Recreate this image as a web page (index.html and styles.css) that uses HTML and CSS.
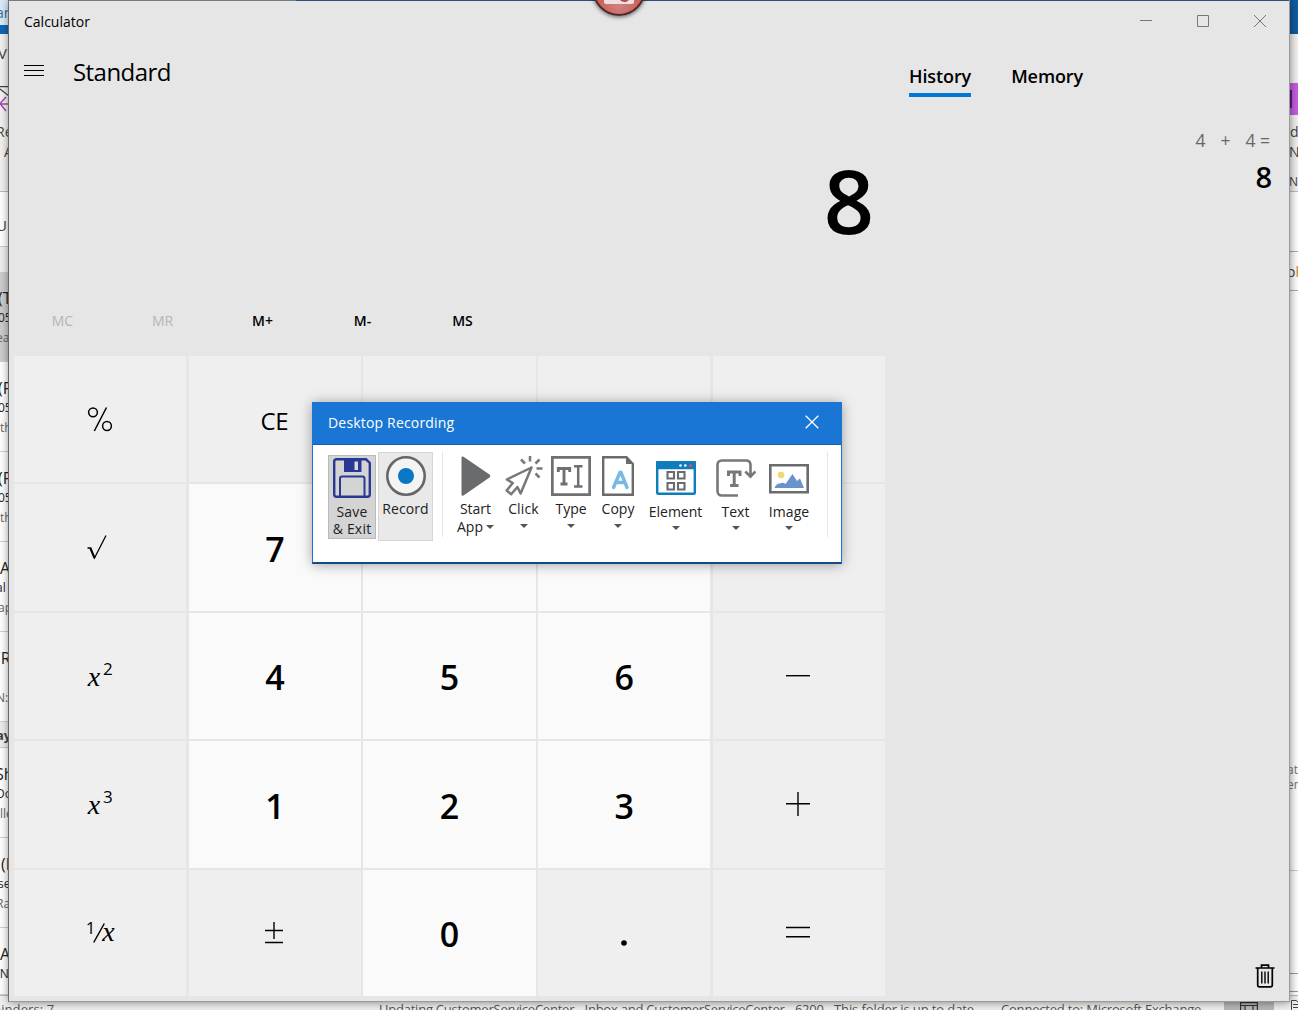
FILE: index.html
```html
<!DOCTYPE html>
<html lang="en">
<head>
<meta charset="utf-8">
<title>Calculator</title>
<link rel="stylesheet" href="styles.css">
</head>
<body>
<div class="desktop">
  <div class="mailapp">
    <div class="mailbody">
      <div class="mail-left">
        <div class="l-tab"><p class="in3">an</p></div>
        <div class="l-blue"></div>
        <div class="l-view"><p class="in1">V</p></div>
        <div class="l-ribbon">
          <svg width="9" height="30" viewBox="0 0 9 30" fill="none"><path d="M0 .5H9M0 3L9 10" stroke="#444" stroke-width="1.3"/><path d="M0 18H9M6 11L0 17.5L6 25" stroke="#a747b2" stroke-width="1.5"/></svg>
          <p class="in3">Re</p><p class="out4">A</p>
        </div>
        <div class="l-search"><p class="in3">Un</p></div>
        <div class="l-head"></div>
        <div class="mail selected"><p class="in1">(T</p><p class="in1">05</p><p class="in3">ea</p></div>
        <div class="mail"><p class="in1">(F</p><p class="in1">05</p><p>th</p></div>
        <div class="mail"><p class="in1">(F</p><p class="in1">05</p><p>th</p></div>
        <div class="mail"><p>A</p><p class="in3">al</p><p class="in1">ap</p></div>
        <div class="mail"><p class="in3">(R</p><p>&nbsp;</p><p class="in3">N:</p></div>
        <div class="l-day"><p class="in3">ay</p></div>
        <div class="mail"><p class="in4">Sh</p><p class="in3">Do</p><p>lle</p></div>
        <div class="mail"><p class="out1">(I</p><p class="in1">se</p><p class="in3">Ra</p></div>
        <div class="mail last"><p>A</p><p class="in3">-N</p></div>
      </div>
      <div class="mail-right">
        <div class="r-blue"></div>
        <div class="r-view"></div>
        <div class="r-purple"><i></i></div>
        <div class="r-ribbon"><p class="out1">d</p><p>N</p><p class="small">N</p></div>
        <div class="r-white"></div>
        <div class="r-folder"><p class="in1">o<b>l</b></p></div>
        <div class="r-note"><p class="in1">at</p><p class="in1">em</p></div>
        <div class="r-gap"></div>
        <div class="r-gap2"></div>
      </div>
    </div>
    <div class="statusbar">
      <span class="st-rem">minders: 7</span>
      <span class="st-upd">Updating CustomerServiceCenter - Inbox and CustomerServiceCenter - 6200.</span>
      <span class="st-date">This folder is up to date.</span>
      <span class="st-con">Connected to: Microsoft Exchange</span>
      <span class="st-view"><svg width="18" height="8" viewBox="0 0 18 8" fill="none" stroke="#333" stroke-width="1.2"><path d="M.6 8V.6H17.4V8M0 3.5H18M5 3.5V8M13 3.5V8"/></svg></span>
      <span class="st-read"><svg width="8" height="16" viewBox="0 0 8 16" fill="none" stroke="#444"><path d="M1.5 16V1.500H6L8 3M3 5.500H8M3 8.500H8M3 11.500H8"/></svg></span>
    </div>
  </div>

  <div class="calc">
    <main class="pad">
      <div class="title">Calculator</div>
      <div class="mode">
        <svg width="20" height="12" viewBox="0 0 20 12" stroke="#000"><path d="M0 .5H20M0 5.500H20M0 10.500H20"/></svg>
        <span>Standard</span>
      </div>
      <div class="display">8</div>
      <div class="memrow"><span class="off">MC</span><span class="off">MR</span><span>M+</span><span>M-</span><span>MS</span></div>
      <div class="keys">
        <div class="key"><svg class="pct" width="26" height="26" viewBox="0 0 26 26" fill="none" stroke="#000" stroke-width="1.500"><circle cx="6" cy="6.300" r="4.400"/><circle cx="20" cy="20" r="4.400"/><path d="M19.500 1.500L7.300 25"/></svg></div>
        <div class="key ce">CE</div>
        <div class="key"></div><div class="key"></div><div class="key"></div>

        <div class="key"><svg class="root" width="22" height="26" viewBox="0 0 22 26" fill="none" stroke="#000"><path d="M1.500 14H4.500L8.500 24L20 1.500" stroke-width="1.300"/><path d="M4.300 14L8.500 24" stroke-width="2"/></svg></div>
        <div class="key num">7</div><div class="key num">8</div><div class="key num">9</div><div class="key"></div>

        <div class="key"><span class="pow"><i>x</i><sup>2</sup></span></div>
        <div class="key num">4</div><div class="key num">5</div><div class="key num">6</div>
        <div class="key op"><svg width="24" height="24" viewBox="0 0 24 24" stroke="#000" stroke-width="1.400"><path d="M0 11.700H24"/></svg></div>

        <div class="key"><span class="pow"><i>x</i><sup>3</sup></span></div>
        <div class="key num low1">1</div><div class="key num low1">2</div><div class="key num low1">3</div>
        <div class="key op"><svg width="24" height="24" viewBox="0 0 24 24" stroke="#000" stroke-width="1.400"><path d="M0 11.700H24M12 0V24"/></svg></div>

        <div class="key"><span class="inv"><sup>1</sup><svg width="12" height="20" viewBox="0 0 12 20" stroke="#000" stroke-width="1.500"><path d="M.7 19.500L11.300 .5"/></svg><i>x</i></span></div>
        <div class="key op"><svg width="20" height="24" viewBox="0 0 20 24" stroke="#000" stroke-width="1.400"><path d="M1 9.500H19M10 1V18M1 21.500H19"/></svg></div>
        <div class="key num">0</div>
        <div class="key dot"><svg width="8" height="8" viewBox="0 0 8 8"><circle cx="4" cy="4" r="2.800"/></svg></div>
        <div class="key op"><svg width="24" height="24" viewBox="0 0 24 24" stroke="#000" stroke-width="1.500"><path d="M0 6.500H24M0 15.800H24"/></svg></div>
      </div>
    </main>
    <aside class="side">
      <div class="controls">
        <svg width="12" height="12" viewBox="0 0 12 12" fill="none" stroke="#777"><path d="M0 5.500H12"/></svg>
        <svg width="12" height="12" viewBox="0 0 12 12" fill="none" stroke="#777"><path d="M.5 .5H11.500V11.500H.5Z"/></svg>
        <svg width="12" height="12" viewBox="0 0 12 12" fill="none" stroke="#777"><path d="M0 0L12 12M12 0L0 12"/></svg>
      </div>
      <div class="tabs"><span class="active">History</span><span>Memory</span></div>
      <div class="expr"><span>4</span><span>+</span><span>4 =</span></div>
      <div class="result">8</div>
      <svg class="trash" width="20" height="24" viewBox="0 0 20 24" fill="none" stroke="#000" stroke-width="1.700"><path d="M.5 4H19.500M6.500 4V1.200H13.500V4M2.700 4V21Q2.700 22.800 4.500 22.800H15.500Q17.300 22.800 17.300 21V4"/><path d="M6.800 7.500V19.500M10 7.500V19.500M13.200 7.500V19.500" stroke-width="1.400"/></svg>
    </aside>
  </div>

  <div class="badge"><svg width="30" height="5" viewBox="0 0 30 5"><path d="M0 0H30V2Q30 4 28 4H2Q0 4 0 2Z" fill="#f1dede"/><path d="M16 0Q18 2.500 22 2L25 0Z" fill="#b4474c"/></svg></div>

  <div class="rec">
    <div class="rec-title"><span>Desktop Recording</span>
      <svg width="14" height="14" viewBox="0 0 14 14" stroke="#fff" stroke-width="1.300"><path d="M.7 .7L13.300 13.300M13.300 .7L.7 13.300"/></svg>
    </div>
    <div class="tools">
      <div class="save">
        <svg width="38" height="40" viewBox="0 0 38 40"><path d="M1.200 3.500Q1.200 1.300 3.500 1.300H33L36.800 5V36.500Q36.800 38.700 34.500 38.700H3.500Q1.200 38.700 1.200 36.500Z" fill="none" stroke="#293894" stroke-width="2.400"/><path d="M11 1H28.500V14H11Z" fill="#293894"/><path d="M21.500 3.500H25V12H21.500Z" fill="#d8d8d8"/><path d="M7 38V20.500Q7 18.500 9 18.500H29.500Q31.500 18.500 31.500 20.500V38" fill="none" stroke="#293894" stroke-width="2"/></svg>
        <p>Save</p><p>&amp; Exit</p>
      </div>
      <div class="record">
        <svg width="40" height="40" viewBox="0 0 40 40"><circle cx="20" cy="20" r="18.700" fill="#f4f4f4" stroke="#666" stroke-width="2.600"/><circle cx="20" cy="20" r="8" fill="#0878c4"/></svg>
        <p>Record</p>
      </div>
      <div class="sep"></div>
      <div class="tool w-start">
        <svg width="30" height="40" viewBox="0 0 30 40"><path d="M.5 2Q.5 0 2.500 .7L28.500 18.500Q30 20 28.500 21.500L2.500 39.500Q.5 40.500 .5 38Z" fill="#6a6b6d"/></svg>
        <p>Start</p><p class="app">App<i class="caret"></i></p>
      </div>
      <div class="tool w-click">
        <svg width="38" height="40" viewBox="0 0 38 40" fill="none" stroke="#77787b"><path d="M26.500 11.500L1.800 23.500L7.800 27L1.600 34.500L6.200 38.200L12.400 31L15.600 37.500Z" stroke-width="2.500" stroke-linejoin="round"/><path d="M25 0V5.500M16 3.500L20 7.500M34.500 3.500L30.500 7.500M31.500 12.500H37.500M30.500 17.500L34.500 21.500" stroke-width="2.500"/></svg>
        <p>Click</p><i class="caret"></i>
      </div>
      <div class="tool w-type">
        <svg width="40" height="40" viewBox="0 0 40 40" fill="none" stroke="#6f7073"><path d="M1.300 1.300H38.700V38.700H1.300Z" stroke-width="2.800"/><path d="M7.300 16V12.500H18.700V16M13 12V28M9.500 28H16.500" stroke-width="2.900"/><path d="M23 10.200H31.500M27.200 10.200V30.500M23 30.500H31.500" stroke-width="2.500"/></svg>
        <p>Type</p><i class="caret"></i>
      </div>
      <div class="tool w-copy">
        <svg width="32" height="40" viewBox="0 0 32 40"><path d="M1.200 1.200H24.500L30.800 8V38.800H1.200Z" fill="#fff" stroke="#6a6b6d" stroke-width="2.400"/><path d="M24 1V8H31Z" fill="#6a6b6d"/><path d="M11.500 31.500L18 16.500H19L25 31.500M14 26.500H23" fill="none" stroke="#78b9e3" stroke-width="3.400" stroke-linecap="round"/></svg>
        <p>Copy</p><i class="caret"></i>
      </div>
      <div class="tool low w-el">
        <svg width="40" height="34" viewBox="0 0 40 34"><rect x="1.200" y="1" width="37.600" height="31.800" rx="1" fill="#fff" stroke="#0e7dbb" stroke-width="2.400"/><path d="M0 1Q0 0 1 0H39Q40 0 40 1V8.300H0Z" fill="#0e7dbb"/><circle cx="24.500" cy="4.500" r="1.300" fill="#fff"/><circle cx="29.300" cy="4.500" r="1.300" fill="#fff"/><circle cx="34.500" cy="4.500" r="1.500" fill="#e84b5c"/><path d="M11.500 11H18V17.500H11.500ZM22 11H28.500V17.500H22ZM11.500 22H18V28.500H11.500ZM22 22H28.500V28.500H22Z" fill="none" stroke="#6a6b6d" stroke-width="2.100"/></svg>
        <p>Element</p><i class="caret"></i>
      </div>
      <div class="tool low w-text">
        <svg width="40" height="38" viewBox="0 0 40 38" fill="none" stroke="#77787b"><path d="M22 36.500H6Q1.500 36.500 1.500 32V6Q1.500 1.500 6 1.500H30Q34.500 1.500 34.500 6V17M29.300 12.500L34.500 17.700L39.500 12.500" stroke-width="2.600"/><path d="M12.500 17V13H24V17M18.200 13V26.500M14 26.500H22.500" stroke-width="3"/></svg>
        <p>Text</p><i class="caret"></i>
      </div>
      <div class="tool low w-img">
        <svg width="40" height="34" viewBox="0 0 40 34"><path d="M1.300 4.300H38.700V31.200H1.300Z" fill="#fff" stroke="#6a6b6d" stroke-width="2.600"/><circle cx="12" cy="14" r="3.300" fill="#f0d878"/><path d="M5.500 27Q7.500 22 11 22.500Q14 21 16.500 23L23.500 13L28 20L31 17.500L35 27Z" fill="#6893cc"/></svg>
        <p>Image</p><i class="caret"></i>
      </div>
      <div class="sep end"></div>
    </div>
  </div>
</div>
</body>
</html>
```
FILE: styles.css
```css
* { box-sizing: border-box; }
body { margin: 0; font-family: "Open Sans", "Noto Sans", sans-serif; color: #000; overflow: hidden; }
p { margin: 0; white-space: nowrap; }
svg { display: block; flex: none; }

.desktop { position: relative; width: 1298px; height: 1010px; overflow: hidden; background: #fff; }

/* mail client behind the calculator */
.mailapp { display: flex; flex-direction: column; height: 1010px; }
.mailbody { display: flex; justify-content: space-between; height: 995px; }
.mail-left, .mail-right { width: 9px; overflow: hidden; font-size: 14px; color: #444; }
.mail-left > div, .mail-right > div { overflow: hidden; flex: none; }
.in1 { text-indent: -2px; }
.in3 { text-indent: -4px; }
.in4 { text-indent: -5px; }
.out1 { text-indent: 1px; }
.out4 { text-indent: 4px; }
.l-tab { height: 25px; background: #dcebf8; color: #2b6ca3; line-height: 26px; }
.l-blue { height: 9px; background: #0f66b6; }
.l-view { height: 52px; background: #f3f2f1; line-height: 39px; font-size: 15px; }
.l-ribbon { height: 106px; background: #f3f2f1; border-bottom: 1px solid #bbb; line-height: 20px; }
.l-ribbon svg { margin-bottom: 6px; }
.l-search { height: 55px; line-height: 66px; font-size: 15px; border-bottom: 1px solid #ccc; }
.l-head { height: 25px; background: #efefef; }
.mail { height: 90px; padding-top: 16px; line-height: 20px; font-size: 12px; border-bottom: 1px solid #d0d0d0; }
.mail p:first-child { font-size: 16px; color: #222; }
.mail p:nth-child(2) { color: #223; }
.mail p:nth-child(3) { color: #666; }
.mail.selected { background: #cdcdcd; }
.mail.last { height: 67px; }
.l-day { height: 26px; background: #eee; line-height: 26px; font-size: 13px; font-weight: 700; border-bottom: 1px solid #ccc; }

.r-blue { height: 34px; background: #115c9f; }
.r-view { height: 49px; background: #f3f2f1; }
.r-purple { height: 32px; background: #c65de0; padding: 7px 0 0 1px; }
.r-purple i { display: block; width: 2px; height: 18px; background: #5b1f86; }
.r-ribbon { height: 77px; padding-top: 7px; background: #f3f2f1; line-height: 20px; border-bottom: 1px solid #bbb; }
.r-ribbon .small { margin-top: 10px; font-size: 12px; }
.r-white { height: 60px; border-bottom: 1px solid #aaa; }
.r-folder { height: 39px; line-height: 40px; border-bottom: 1px solid #aaa; }
.r-folder b { font-weight: 400; color: #d87818; }
.r-note { height: 580px; padding-top: 471px; font-size: 12px; line-height: 15px; color: #777; border-bottom: 1px solid #ccc; }
.r-gap { height: 103px; border-bottom: 1px solid #999; }
.r-gap2 { height: 18px; border-bottom: 1px solid #999; }

.statusbar { display: flex; height: 15px; background: #f1f0ef; font-size: 13px; line-height: 26px; color: #555; white-space: nowrap; border-top: 1px solid #bbb; overflow: hidden; }
.statusbar span { flex: none; }
.st-rem { width: 390px; margin-left: -11px; letter-spacing: .1px; }
.st-upd { width: 455px; letter-spacing: -.23px; }
.st-date { width: 167px; letter-spacing: -.1px; }
.st-con { width: 223px; letter-spacing: -.2px; }
.st-view { width: 50px; background: #b8b8b8; padding: 6px 16px 0; }
.st-read { padding: 3px 0 0 16px; }

/* calculator window */
.calc { position: absolute; left: 9px; top: 0; width: 1281px; height: 1002px; display: flex; background: #e6e6e6; border: 1px solid #9a9a9a; border-left: 0; border-top: 0; box-shadow: 0 0 9px rgba(0,0,0,.5), -1px 0 0 #888; }
.calc::before { content: ""; position: absolute; inset: 0 0 auto; height: 1px; background: linear-gradient(90deg, #777b82 287px, #2c5179 287px); }
.pad { width: 876px; padding-left: 5px; display: flex; flex-direction: column; }
.title { height: 43px; padding-left: 10px; font-size: 14px; line-height: 43px; }
.mode { display: flex; align-items: center; gap: 29px; height: 57px; padding-left: 10px; font-size: 24px; letter-spacing: -.55px; }
.mode svg { margin-top: -2px; }
.display { height: 187px; padding-right: 11px; text-align: right; font-size: 88px; line-height: 201px; font-weight: 600; }
.memrow { display: flex; height: 69px; margin-left: -1.500px; font-size: 14px; font-weight: 600; line-height: 68px; }
.memrow span { width: 100px; text-align: center; }
.memrow .off { color: #b5b5b5; font-weight: 400; }
.keys { display: grid; grid-template-columns: repeat(5, 1fr); grid-template-rows: repeat(5, 1fr); gap: 2.200px; height: 640px; }
.key { display: flex; align-items: center; justify-content: center; background: #efefef; }
.key.num { background: #fafafa; font-size: 34px; font-weight: 600; padding-top: 2px; }
.key.low1 { padding-top: 4px; }
.key.ce { font-size: 24px; letter-spacing: -.4px; padding: 2px 1px 0 0; }
.key.op { padding-right: 2px; }
.key .pct { margin-right: 1px; }
.key .root { margin: -2px 6px 0 0; }
.key.dot { padding-top: 20px; }
.pow, .inv { font-family: "Liberation Serif", serif; font-size: 28px; line-height: 30px; white-space: nowrap; }
.pow { padding-top: 1px; }
.pow sup, .inv sup { font: 17px/10px "Open Sans", sans-serif; vertical-align: 11px; }
.pow sup { margin-left: 3px; }
.inv { display: flex; align-items: center; }
.inv sup { margin: -9px -2px 0 0; }
.inv i { margin: 0 0 1px -3px; }

.side { flex: 1; display: flex; flex-direction: column; }
.controls { display: flex; justify-content: flex-end; gap: 45px; height: 62px; padding: 15px 23px 0 0; }
.tabs { display: flex; gap: 40px; height: 58px; padding-left: 24px; font-size: 18px; font-weight: 600; line-height: 29px; letter-spacing: -.1px; }
.tabs span { height: 35px; }
.tabs .active { border-bottom: 4px solid #0078d7; }
.expr { display: flex; justify-content: flex-end; gap: 15px; height: 40px; padding-right: 19px; font-size: 17.500px; line-height: 40px; color: #666; }
.result { flex: 1; padding-right: 17px; text-align: right; font-size: 29px; font-weight: 600; line-height: 33px; }
.trash { align-self: flex-end; margin: 0 14px 13px 0; }

/* round marker cut by the top edge */
.badge { position: absolute; left: 592px; top: -39px; width: 54px; height: 55px; padding: 37px 0 0 10px; border-radius: 50%; border: 2px solid #4c2a2a; background: radial-gradient(circle at 50% 80%, #cf8580, #c9504c 60%); box-shadow: 0 1px 4px rgba(0,0,0,.6); }

/* recorder window */
.rec { position: absolute; left: 312px; top: 402px; width: 530px; height: 162px; background: #fff; border: 1px solid #1976d2; border-bottom: 2px solid #124a8a; box-shadow: 0 1px 12px rgba(0,0,0,.35); }
.rec-title { display: flex; justify-content: space-between; height: 42px; padding: 0 22px 0 15px; background: #1976d4; border-bottom: 1px solid #155fa9; color: #fff; font-size: 14px; line-height: 39px; letter-spacing: .18px; }
.rec-title svg { margin-top: 12px; }
.tools { display: flex; align-items: flex-start; padding: 7px 0 0 15px; font-size: 14px; line-height: 18px; text-align: center; color: #222; }
.save { width: 48px; height: 84px; margin-top: 3px; padding-top: 2px; background: #d4d4d4; border: 1px solid #b9b9b9; line-height: 17px; letter-spacing: .2px; }
.save svg { margin: 0 auto 5px; }
.record { width: 55px; height: 89px; margin-left: 2px; padding-top: 3px; background: #e9e9e9; border: 1px solid #d6d6d6; letter-spacing: .1px; }
.record svg { margin: 0 auto 4px; }
.sep { width: 1px; height: 85px; margin-left: 9px; background: #e6e6e6; }
.sep.end { margin-left: 11px; }
.tool { padding-top: 4px; }
.tool svg { margin: 0 auto 4px; }
.w-start { width: 47px; margin-left: 9px; }
.w-click { width: 49px; letter-spacing: .15px; }
.w-type { width: 46px; }
.w-copy { width: 48px; }
.low { padding-top: 9px; }
.low svg { margin-bottom: 8px; }
.w-el { width: 67px; }
.w-text { width: 53px; padding-top: 7px; }
.w-text svg { margin-bottom: 6px; }
.w-img { width: 54px; letter-spacing: .1px; }
.caret { display: block; width: 0; margin: 6px auto 0; border: 4px solid transparent; border-top-color: #555; border-bottom: 0; }
.low .caret { margin-top: 5px; }
.app .caret { display: inline-block; margin: 0 0 3px 3px; }
```
